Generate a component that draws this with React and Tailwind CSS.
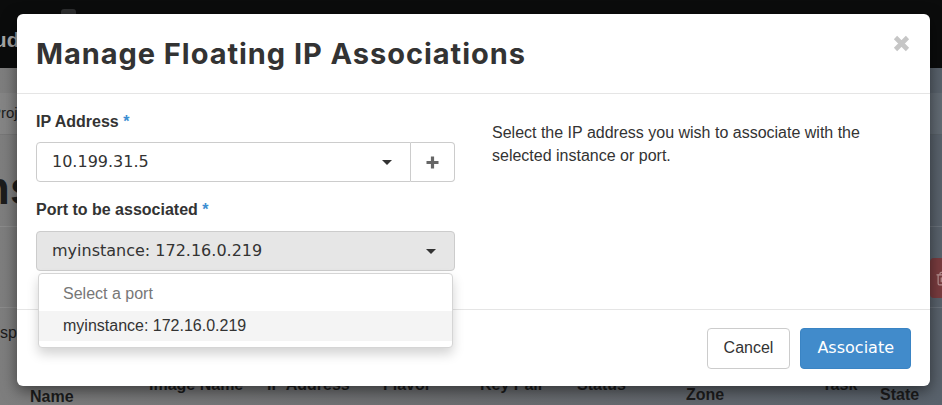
import React from "react";
import { Trash2 } from "lucide-react";

function Caret() {
  return (
    <svg width="10" height="5" viewBox="0 0 10 5" className="shrink-0">
      <path d="M0 0h10L5 5z" fill="#333" />
    </svg>
  );
}

function CloseX() {
  return (
    <svg width="17" height="17" viewBox="0 0 17 17">
      <path d="M2.5 2.5L14.5 14.5M14.5 2.5L2.5 14.5" stroke="#c6c6c6" strokeWidth="4.6" />
    </svg>
  );
}

function Plus() {
  return (
    <svg width="13" height="13" viewBox="0 0 13 13">
      <path d="M6.5 0.5v12M0.5 6.5h12" stroke="#666" strokeWidth="3.2" />
    </svg>
  );
}

export default function App() {
  const sans = "font-['Liberation_Sans',Arial,sans-serif]";
  const deja = "font-['DejaVu_Sans',sans-serif]";
  return (
    <div className={`relative w-[942px] h-[405px] overflow-hidden ${sans} text-[#333]`}>
      {/* dimmed page behind */}
      <div className="flex flex-col h-full">
        <div className="h-[68px] shrink-0 bg-[#0b0c0c] flex items-start">
          <span className="ml-[-40px] mt-[28px] text-[21px] leading-[24px] font-bold text-[#a5a5a5]">Cloud</span>
          <span className="ml-[42px] mt-[9px] w-[15px] h-[10px] rounded-[3px] bg-[#2e2f30]" />
        </div>
        <div className="flex-1 flex flex-col bg-gradient-to-r from-[#7e7e7e] via-[#6b6d70] to-[#59626c] text-[#1c1c1c]">
          <div className="h-[25px] shrink-0" />
          <div className="h-[42px] shrink-0 bg-white/[0.06] border-b border-black/10 flex items-center">
            <span className="ml-[-9px] text-[15px]">Project</span>
          </div>
          <div className="h-[92px] shrink-0 border-b border-white/10 flex items-start">
            <span className="ml-[-31px] mt-[28px] text-[46px] leading-[50px] font-bold">Instances</span>
          </div>
          <div className="h-[81px] shrink-0 border-b border-white/10 flex items-start justify-end">
            <div className="mt-[31px] mr-[-70px] w-[82px] h-[40px] bg-[#7a3c3f] rounded-[4px] flex items-center pl-[5px]">
              <Trash2 size={15} color="#b58f90" />
            </div>
          </div>
          <div className="h-[57px] shrink-0 flex items-start">
            <span className="ml-[-15px] mt-[13px] text-[16px]">Displaying 1 item</span>
          </div>
          <div className="flex text-[16px] leading-[18px] font-bold">
            <div className="w-[149px] pl-[30px] pt-[23px]">Name</div>
            <div className="w-[118px] pt-[11px]">Image Name</div>
            <div className="w-[116px] pt-[11px]">IP Address</div>
            <div className="w-[97px] pt-[11px]">Flavor</div>
            <div className="w-[97px] pt-[11px]">Key Pair</div>
            <div className="w-[109px] pt-[11px]">Status</div>
            <div className="w-[136px] mt-[-3px] leading-[22px]">Availability<br />Zone</div>
            <div className="w-[58px] pt-[11px]">Task</div>
            <div className="mt-[-3px] leading-[22px]">Power<br />State</div>
          </div>
        </div>
      </div>

      {/* modal */}
      <div className="absolute left-[17px] top-[14px] w-[913px] h-[372px] bg-white rounded-[6px] shadow-[0_5px_15px_rgba(0,0,0,0.5)] flex flex-col">
        <div className="h-[80px] shrink-0 border-b border-[#e5e5e5] flex items-center justify-between pl-[19px] pr-[20px]">
          <h4 className="font-['Inter',sans-serif] font-bold text-[29px] leading-none tracking-[0.95px] text-[#333]">
            Manage Floating IP Associations
          </h4>
          <button className="self-start mt-[21px]">
            <CloseX />
          </button>
        </div>

        <div className="h-[215px] shrink-0 flex pl-[19px] pt-[16px]">
          <div className="w-[419px] shrink-0">
            <label className="block h-[23px] leading-[23px] font-bold text-[16px]">
              IP Address <span className="text-[#3d8ed2]">*</span>
            </label>
            <div className="mt-[9px] flex h-[40px]">
              <div className={`flex-1 flex items-center justify-between border border-[#ccc] rounded-l-[4px] pl-[15px] pr-[18px] ${deja} text-[16px] text-[#333]`}>
                <span>10.199.31.5</span>
                <Caret />
              </div>
              <div className="w-[44px] flex items-center justify-center border border-l-0 border-[#ccc] rounded-r-[4px]">
                <Plus />
              </div>
            </div>
            <label className="block mt-[16px] h-[23px] leading-[23px] font-bold text-[16px]">
              Port to be associated <span className="text-[#3d8ed2]">*</span>
            </label>
            <div className="relative mt-[10px]">
              <div className={`h-[40px] flex items-center justify-between border border-[#ccc] bg-[#e6e6e6] rounded-[4px] pl-[15px] pr-[18px] ${deja} text-[16px] text-[#333]`}>
                <span>myinstance: 172.16.0.219</span>
                <Caret />
              </div>
              <div className="absolute z-10 left-[2px] right-[2px] top-[42px] bg-white border border-[#d5d5d5] rounded-[4px] shadow-[0_6px_12px_rgba(0,0,0,0.175)] pt-[3px] pb-[6px] text-[16px]">
                <div className="h-[34px] flex items-center pl-[24px] text-[#777]">Select a port</div>
                <div className="h-[30px] flex items-center pl-[24px] bg-[#f4f4f4] text-[#333]">myinstance: 172.16.0.219</div>
              </div>
            </div>
          </div>
          <div className="ml-[37px] mt-[11px] w-[390px] text-[16px] leading-[23px] text-[#333]">
            Select the IP address you wish to associate with the selected instance or port.
          </div>
        </div>

        <div className="flex-1 border-t border-[#e5e5e5] flex items-center justify-end pr-[19px] gap-[10px]">
          <button className="h-[41px] px-[16px] border border-[#ccc] rounded-[4px] bg-white text-[16px] text-[#333]">
            Cancel
          </button>
          <button className={`h-[41px] px-[16px] border border-[#3a84c4] rounded-[4px] bg-[#418bcb] text-[16px] text-white ${deja}`}>
            Associate
          </button>
        </div>
      </div>
    </div>
  );
}
